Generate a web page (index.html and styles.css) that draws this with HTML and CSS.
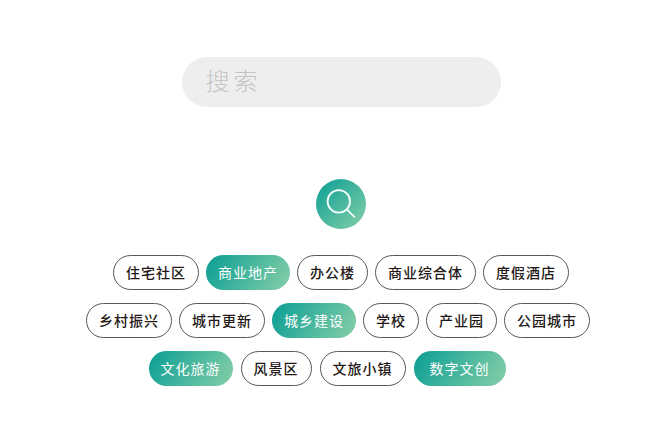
FILE: index.html
```html
<!DOCTYPE html>
<html lang="zh-CN">
<head>
  <title>搜索</title>
  <meta charset="UTF-8">
  <meta name="viewport" content="width=device-width, initial-scale=1">
  <link rel="stylesheet" href="styles.css">
</head>
<body>
  <form class="search" role="search">
    <input type="search" class="search-input" placeholder="搜索" aria-label="搜索">
    <button type="button" class="search-button" aria-label="搜索">
      <svg class="search-icon" viewBox="0 0 50 50" aria-hidden="true">
        <circle cx="22.8" cy="22.4" r="11.2" />
        <path d="M30.6 30.2 L38.8 38.4" />
      </svg>
    </button>
  </form>

  <div class="tags">
    <div class="tag-row">
      <button type="button" class="tag">住宅社区</button>
      <button type="button" class="tag active">商业地产</button>
      <button type="button" class="tag">办公楼</button>
      <button type="button" class="tag">商业综合体</button>
      <button type="button" class="tag">度假酒店</button>
    </div>
    <div class="tag-row middle">
      <button type="button" class="tag">乡村振兴</button>
      <button type="button" class="tag">城市更新</button>
      <button type="button" class="tag active">城乡建设</button>
      <button type="button" class="tag">学校</button>
      <button type="button" class="tag">产业园</button>
      <button type="button" class="tag">公园城市</button>
    </div>
    <div class="tag-row last">
      <button type="button" class="tag active">文化旅游</button>
      <button type="button" class="tag">风景区</button>
      <button type="button" class="tag">文旅小镇</button>
      <button type="button" class="tag active wide">数字文创</button>
    </div>
  </div>
</body>
</html>
```
FILE: styles.css
```css
* {
  box-sizing: border-box;
}

body {
  font-family: "Noto Sans CJK SC", sans-serif;
  background-color: #fff;
  margin: 0;
  padding: 57px 0 32px 22px;
  color: #231815;
}

button {
  font-family: inherit;
  cursor: pointer;
}

.search {
  display: flex;
  flex-direction: column;
  align-items: center;
  gap: 72px;
}

.search-input {
  width: 50%;
  min-width: 240px;
  height: 50px;
  padding: 0 24px 6px;
  border: none;
  border-radius: 25px;
  background-color: #eee;
  font-family: inherit;
  font-size: 24px;
  font-weight: 300;
  letter-spacing: 4px;
  color: #666;
  appearance: none;
}

.search-input::placeholder {
  color: #c4c4c4;
  opacity: 1;
}

.search-button {
  width: 50px;
  height: 50px;
  padding: 0;
  border: none;
  border-radius: 50%;
  background: linear-gradient(135deg, #0a9e94, #86cfa8);
}

.search-icon {
  display: block;
  width: 100%;
  fill: none;
  stroke: #f2fffb;
  stroke-width: 1.8;
}

.tags {
  display: flex;
  flex-direction: column;
  gap: 13px;
  margin-top: 26px;
}

.tag-row {
  display: flex;
  flex-wrap: wrap;
  justify-content: center;
  gap: 7px;
}

.middle {
  padding-right: 6px;
}

.last {
  gap: 8px;
  padding-right: 28px;
}

.tag {
  height: 35px;
  padding: 0 12px 2px;
  border: 1px solid #595757;
  border-radius: 18px;
  background-color: #fff;
  font-size: 14px;
  font-weight: 500;
  line-height: 20px;
  letter-spacing: 1px;
  color: #231815;
}

.active {
  border: none;
  background: linear-gradient(120deg, #0a9e94, #86cfa8);
  font-weight: 400;
  color: #fff;
}

.wide {
  padding: 0 16px 2px;
}
```
